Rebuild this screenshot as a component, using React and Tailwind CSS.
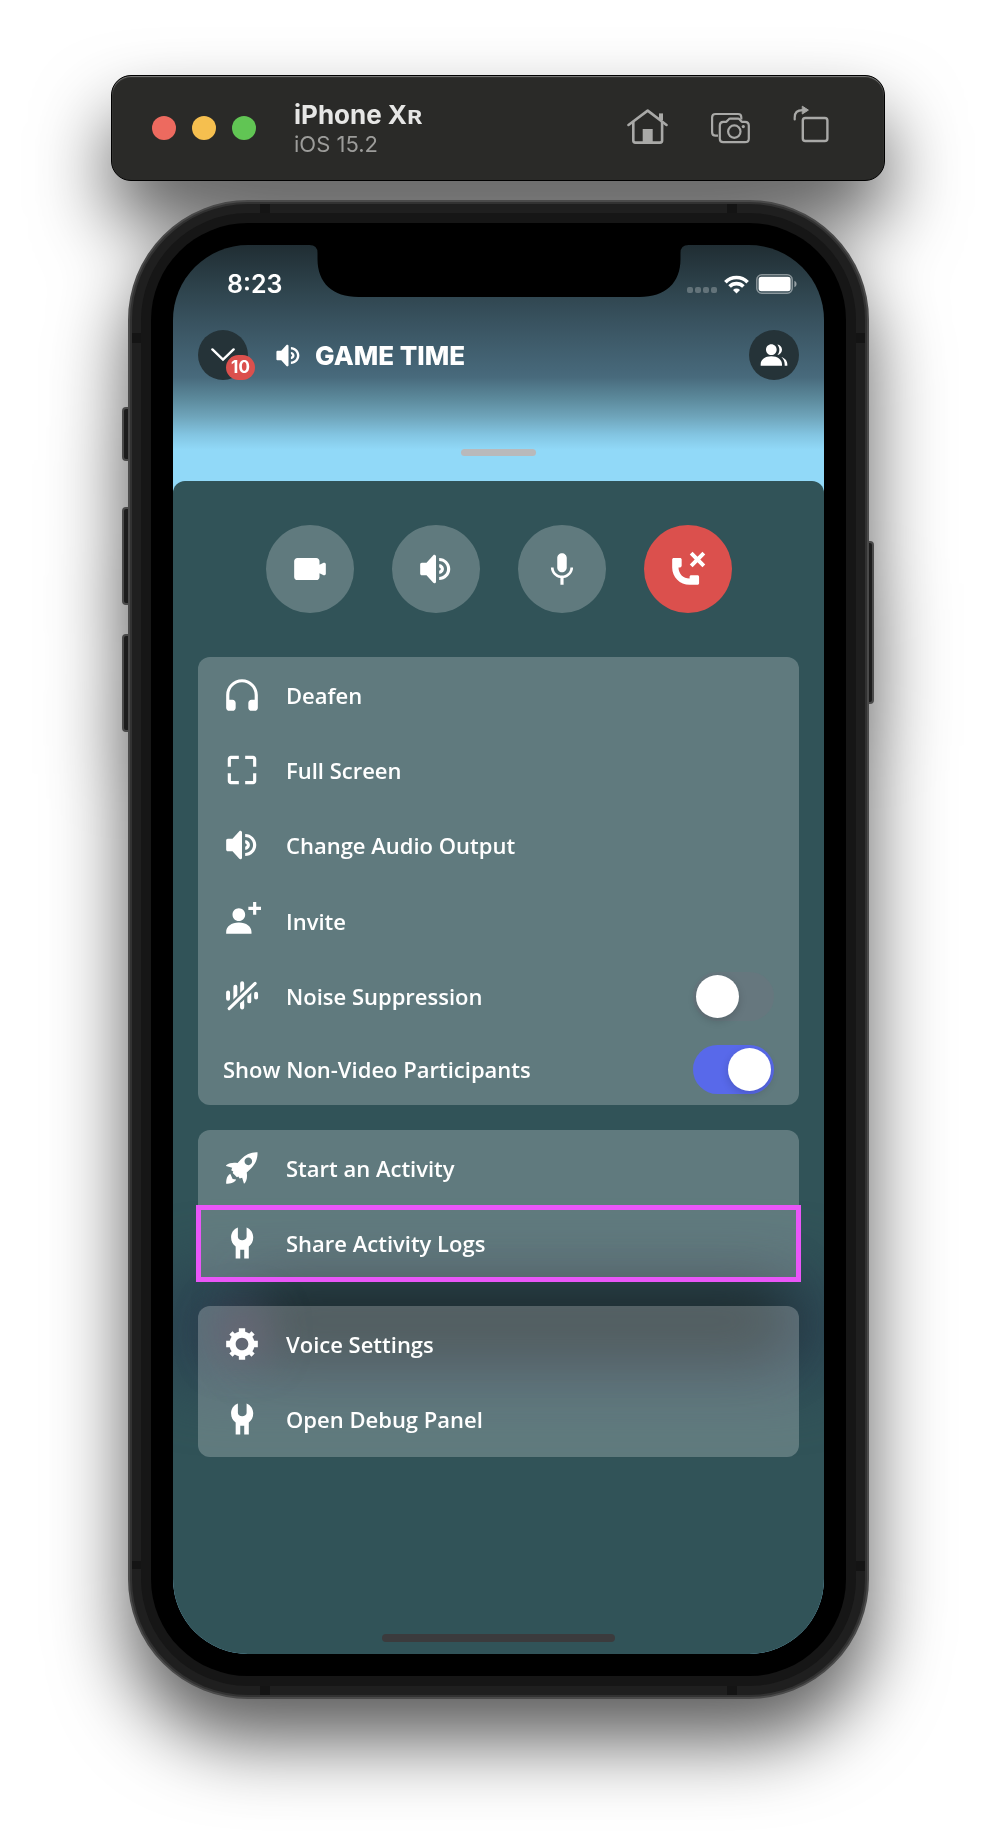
import { useId } from "react";

const paths = {
  headset:
    "M12 2.003C6.486 2.003 2 6.488 2 12.003V20.003C2 21.107 2.895 22.003 4 22.003H6C7.104 22.003 8 21.107 8 20.003V17.003C8 15.899 7.104 15.003 6 15.003H4V12.003C4 7.591 7.589 4.003 12 4.003C16.411 4.003 20 7.591 20 12.003V15.003H18C16.896 15.003 16 15.899 16 17.003V20.003C16 21.107 16.896 22.003 18 22.003H20C21.104 22.003 22 21.107 22 20.003V12.003C22 6.488 17.514 2.003 12 2.003Z",
  fullscreen:
    "M3 10V5C3 3.9 3.9 3 5 3H10V5H5V10H3ZM14 3H19C20.1 3 21 3.9 21 5V10H19V5H14V3ZM3 14H5V19H10V21H5C3.9 21 3 20.1 3 19V14ZM19 14H21V19C21 20.1 20.1 21 19 21H14V19H19V14Z",
  speaker:
    "M11.383 3.079C11.009 2.925 10.579 3.01 10.293 3.296L6 8.002H3C2.45 8.002 2 8.453 2 9.002V15.002C2 15.552 2.45 16.002 3 16.002H6L10.293 20.71C10.579 20.996 11.009 21.082 11.383 20.927C11.757 20.772 12 20.407 12 20.002V4.002C12 3.599 11.757 3.232 11.383 3.079ZM14 5.002V7.002C16.757 7.002 19 9.246 19 12.002C19 14.759 16.757 17.002 14 17.002V19.002C17.86 19.002 21 15.863 21 12.002C21 8.143 17.86 5.002 14 5.002ZM14 9.002C15.654 9.002 17 10.349 17 12.002C17 13.657 15.654 15.002 14 15.002V13.002C14.551 13.002 15 12.553 15 12.002C15 11.451 14.551 11.002 14 11.002V9.002Z",
  invite:
    "M24 3H21V0H19V3H16V5H19V8H21V5H24V3ZM14 8.006C14 10.211 12.206 12.006 10 12.006C7.795 12.006 6 10.211 6 8.006C6 5.801 7.794 4.006 10 4.006C12.206 4.006 14 5.801 14 8.006ZM2 19.006C2 15.473 5.29 13.006 10 13.006C14.711 13.006 18 15.473 18 19.006V20.006H2V19.006Z",
  people:
    "M14 8.006C14 10.211 12.206 12.006 10 12.006C7.795 12.006 6 10.211 6 8.006C6 5.801 7.794 4.006 10 4.006C12.206 4.006 14 5.801 14 8.006ZM2 19.006C2 15.473 5.29 13.006 10 13.006C14.711 13.006 18 15.473 18 19.006V20.006H2V19.006ZM20 20.006H22V19.006C22 16.443 20.27 14.442 17.521 13.535C19.062 14.913 20 16.806 20 19.006V20.006ZM14.883 11.908C16.666 11.504 18 9.908 18 8.006C18 5.969 16.469 4.282 14.497 4.037C15.432 5.095 16 6.485 16 8.006C16 9.449 15.489 10.774 14.638 11.81C14.72 11.842 14.802 11.874 14.883 11.908Z",
  video:
    "M21.526 8.149C21.231 7.966 20.862 7.951 20.553 8.105L18 9.382V7C18 5.897 17.103 5 16 5H4C2.897 5 2 5.897 2 7V17C2 18.104 2.897 19 4 19H16C17.103 19 18 18.104 18 17V14.618L20.553 15.894C20.694 15.965 20.847 16 21 16C21.183 16 21.365 15.949 21.526 15.851C21.82 15.668 22 15.347 22 15V9C22 8.653 21.82 8.332 21.526 8.149Z",
  mic: "M14.99 11C14.99 12.66 13.66 14 12 14C10.34 14 9 12.66 9 11V5C9 3.34 10.34 2 12 2C13.66 2 15 3.34 15 5L14.99 11ZM12 16.1C14.76 16.1 17.3 14 17.3 11H19C19 14.42 16.28 17.24 13 17.72V22H11V17.72C7.72 17.23 5 14.41 5 11H6.7C6.7 14 9.24 16.1 12 16.1Z",
  leave:
    "M21.117 1.116L22.884 2.884L19.768 6L22.884 9.116L21.117 10.884L18 7.768L14.884 10.884L13.117 9.116L16.233 6L13.117 2.884L14.884 1.116L18 4.232L21.117 1.116ZM18 22H13C6.925 22 2 17.075 2 11V6C2 5.447 2.448 5 3 5H7C7.553 5 8 5.447 8 6V10C8 10.553 7.553 11 7 11H6C6.063 14.938 9 18 13 18V17C13 16.447 13.447 16 14 16H18C18.553 16 19 16.447 19 17V21C19 21.553 18.553 22 18 22Z",
  wrench:
    "M9.4 2.2V8.2C9.4 9.5 10.6 10.2 12.1 10.2C13.6 10.2 14.9 9.5 14.9 8.2V2.2C17.5 3.2 19.1 5.6 19.1 8.4C19.1 11 18 13 16.3 14.2V21.8H13.4V16.2H10.9V21.8H8V14.2C6.2 13 5.1 11 5.1 8.4C5.1 5.6 6.7 3.2 9.4 2.2Z",
  gear: "M19.738 10H22V14H19.739C19.498 14.931 19.1 15.798 18.565 16.564L20 18L18 20L16.565 18.564C15.797 19.099 14.932 19.498 14 19.738V22H10V19.738C9.069 19.498 8.203 19.099 7.436 18.564L6 20L4 18L5.436 16.564C4.901 15.799 4.502 14.932 4.262 14H2V10H4.262C4.502 9.068 4.9 8.202 5.436 7.436L4 6L6 4L7.436 5.436C8.202 4.9 9.068 4.502 10 4.262V2H14V4.261C14.932 4.502 15.797 4.9 16.565 5.435L18 4L20 6L18.564 7.436C19.099 8.202 19.498 9.069 19.738 10ZM12 16C14.209 16 16 14.209 16 12C16 9.791 14.209 8 12 8C9.791 8 8 9.791 8 12C8 14.209 9.791 16 12 16Z",
  rocket:
    "M21.8 2.1C17.8 1.9 14.3 3.4 11.4 6.4L9.2 8.9C6.6 8.5 4.2 8.7 2 10.2L1.9 10.7L5.8 11.8L5.2 13.4L6.5 14.2L6.1 15.1L8.8 17.8L9.7 17.4L10.5 18.7L12.1 18.1L13.2 21.8L13.8 21.7C15.2 19.6 15.4 17.3 15 14.8L17.5 12.5C20.5 9.6 22 6.1 21.8 2.1ZM16 5.4C17.35 5.4 18.4 6.5 18.4 7.8C18.4 9.1 17.35 10.2 16 10.2C14.65 10.2 13.6 9.1 13.6 7.8C13.6 6.5 14.65 5.4 16 5.4ZM4.6 15.6C2.6 16.7 2 18.9 2 21.9C5 21.8 7.3 21.3 8.3 19.2L6.1 18.9L4.6 15.6Z",
};

function Icon({ name, className = "size-[38px]" }) {
  return (
    <svg viewBox="0 0 24 24" fill="currentColor" fillRule="evenodd" className={`shrink-0 ${className}`} aria-hidden="true">
      <path d={paths[name]} />
    </svg>
  );
}

function NoiseIcon() {
  return (
    <svg viewBox="0 0 24 24" className="size-[38px] shrink-0" aria-hidden="true">
      <g stroke="currentColor" strokeWidth="2.5" strokeLinecap="round">
        <path d="M3.2 9.8V13.8M7.8 6.2V14M12.1 3.9V18.6M16.6 9V15.4M20.9 10.6V12.9" />
      </g>
      <path d="M2.5 21.4L20.6 4" stroke="#617a7e" strokeWidth="4.8" />
      <path d="M3.9 20L20.3 4" stroke="currentColor" strokeWidth="2" strokeLinecap="round" />
      <path d="M12.1 17V19.2" stroke="currentColor" strokeWidth="2.5" strokeLinecap="round" />
    </svg>
  );
}

function HouseIcon() {
  return (
    <svg viewBox="0 0 42 42" className="size-[42px]" fill="none" stroke="currentColor" strokeWidth="2.6" strokeLinecap="round" strokeLinejoin="round" aria-hidden="true">
      <path d="M2.5 18L21.7 3.6L40.5 18" />
      <path d="M7.3 15V33.5Q7.3 35.6 9.4 35.6H34Q36.1 35.6 36.1 33.5V15" />
      <path d="M35 13V6.4" strokeWidth="4" strokeLinecap="butt" />
      <rect x="16.7" y="22" width="10" height="14" fill="currentColor" stroke="none" />
    </svg>
  );
}

function CamerasIcon() {
  return (
    <svg viewBox="0 2 42 42" className="size-[42px]" fill="none" stroke="currentColor" strokeWidth="2.2" strokeLinejoin="round" aria-hidden="true">
      <path d="M9 30.7H6.6Q3.1 30.7 3.1 27.2V12.4Q3.1 9 6.6 9H29Q32.3 9 32.3 12.2V14.4" />
      <path d="M14.2 16.8H17.4L19.6 14.4Q20.2 13.7 21.2 13.7H29Q30 13.7 30.6 14.4L32.8 16.8H36Q39.8 16.8 39.8 20.4V33.8Q39.8 37.2 36 37.2H14.2Q10.8 37.2 10.8 33.8V20.4Q10.8 16.8 14.2 16.8Z" />
      <circle cx="25.3" cy="26.6" r="6.2" />
      <circle cx="34.3" cy="21.6" r="1.6" fill="currentColor" stroke="none" />
    </svg>
  );
}

function RotateIcon() {
  return (
    <svg viewBox="0 0 42 42" className="size-[42px] overflow-visible" fill="none" stroke="currentColor" strokeWidth="2.4" strokeLinecap="round" aria-hidden="true">
      <rect x="10.8" y="11" width="24.6" height="23" rx="2.6" />
      <path d="M2.7 12.4V10.4Q2.7 3.2 10.5 3.2" strokeWidth="2.2" />
      <path d="M10.6 -0.6L16.4 3.1L10.6 6.8Z" fill="currentColor" strokeWidth="1" strokeLinejoin="round" />
    </svg>
  );
}

function WifiIcon() {
  return (
    <svg viewBox="0 0 25 19" className="h-[19px] w-[25px]" fill="none" stroke="#fff" strokeWidth="3.6" aria-hidden="true">
      <path d="M1.4 7.2A15.4 15.4 0 0 1 23.6 7.2" />
      <path d="M5.6 11.6A9.6 9.6 0 0 1 19.4 11.6" />
      <path d="M12.5 18.6L9 15A5 5 0 0 1 16 15Z" fill="#fff" stroke="none" />
    </svg>
  );
}

function BatteryIcon() {
  return (
    <svg viewBox="0 0 41 20" className="h-[20px] w-[41px]" aria-hidden="true">
      <rect x="0.8" y="0.8" width="35.4" height="18.4" rx="5" fill="none" stroke="#fff" strokeOpacity="0.45" strokeWidth="1.5" />
      <rect x="2.6" y="2.8" width="32" height="14.4" rx="2.6" fill="#fff" />
      <path d="M38.4 6.8Q40.6 7.6 40.6 10T38.4 13.2Z" fill="#fff" fillOpacity="0.5" />
    </svg>
  );
}

function Notch() {
  return (
    <svg viewBox="0 0 379 53" className="absolute top-0 left-1/2 h-[53px] w-[379px] -translate-x-1/2" aria-hidden="true">
      <path d="M0 0H379Q371 0 371 8V14C371 38 356 52 330 52H49C23 52 8 38 8 14V8Q8 0 0 0Z" fill="#000" />
    </svg>
  );
}

function Toggle({ id, defaultChecked }) {
  return (
    <input
      id={id}
      type="checkbox"
      role="switch"
      defaultChecked={defaultChecked}
      className="h-[49px] w-[81px] shrink-0 cursor-pointer appearance-none rounded-full bg-[#66777e] p-[3px] before:block before:size-[43px] before:rounded-full before:bg-white before:shadow-[0_3px_8px_rgba(0,0,0,0.16)] checked:bg-[#5869ea] checked:pl-[35px]"
    />
  );
}

function Card({ children, rows }) {
  return <ul className={`grid rounded-[12px] bg-white/[0.23] ${rows}`}>{children}</ul>;
}

function ActionRow({ icon, children, highlighted }) {
  return (
    <li className="relative">
      <button type="button" className="flex size-full cursor-pointer items-center gap-[25px] px-[25px] text-left">
        <Icon name={icon} />
        {children}
      </button>
      {highlighted && <span className="pointer-events-none absolute -inset-x-[2px] -top-px -bottom-px border-[5px] border-[#e956f8]" />}
    </li>
  );
}

function ToggleRow({ icon, label, defaultChecked }) {
  const id = useId();
  return (
    <li className="flex items-center gap-[25px] px-[25px]">
      {icon}
      <label htmlFor={id} className="flex-1">
        {label}
      </label>
      <Toggle id={id} defaultChecked={defaultChecked} />
    </li>
  );
}

function CallButton({ icon, label, color = "bg-white/[0.23]" }) {
  return (
    <button type="button" aria-label={label} className={`flex size-[88px] cursor-pointer items-center justify-center rounded-full ${color}`}>
      <Icon name={icon} />
    </button>
  );
}

function Toolbar() {
  return (
    <header className="flex h-[106px] items-center rounded-[20px] border border-black bg-[#2a2a28] pr-[50px] pl-[40px] shadow-[inset_0_1px_1px_rgba(255,255,255,0.4)]">
      <div className="flex gap-4">
        <button type="button" aria-label="Close" className="size-6 rounded-full bg-[#ed6a5f]" />
        <button type="button" aria-label="Minimize" className="size-6 rounded-full bg-[#f5bf4f]" />
        <button type="button" aria-label="Zoom" className="size-6 rounded-full bg-[#61c554]" />
      </div>
      <div className="ml-[38px] flex-1 pt-[2px] font-['Inter',sans-serif]">
        <h1 className="text-[26px] leading-[30px] font-bold text-[#e6e6e5]">iPhone Xʀ</h1>
        <p className="text-[22px] leading-[28px] text-[#9c9c9a]">iOS 15.2</p>
      </div>
      <div className="flex gap-[41px] text-[#a9a9a7]">
        <button type="button" aria-label="Home"><HouseIcon /></button>
        <button type="button" aria-label="Screenshot"><CamerasIcon /></button>
        <button type="button" aria-label="Rotate"><RotateIcon /></button>
      </div>
    </header>
  );
}

function StatusBar() {
  return (
    <div className="relative flex h-[78px] items-center justify-between pr-[27px] pl-[54px]">
      <Notch />
      <span className="pt-[2px] font-['Inter',sans-serif] text-[25px] font-semibold">8:23</span>
      <div className="flex items-center gap-[7px]">
        <div className="flex gap-[2px] pt-[12px]">
          <span className="size-[6px] rounded-[2px] bg-white/25" />
          <span className="size-[6px] rounded-[2px] bg-white/25" />
          <span className="size-[6px] rounded-[2px] bg-white/25" />
          <span className="size-[6px] rounded-[2px] bg-white/25" />
        </div>
        <WifiIcon />
        <BatteryIcon />
      </div>
    </div>
  );
}

function ChannelHeader() {
  return (
    <div className="flex items-center px-[25px] pt-[7px]">
      <button type="button" aria-label="Minimize call, 10 mentions" className="relative flex size-[50px] items-center justify-center rounded-full bg-[#253338]">
        <svg viewBox="0 0 24 14" className="h-[14px] w-[24px]" fill="none" stroke="#fff" strokeWidth="2.4" strokeLinecap="round" aria-hidden="true">
          <path d="M1.4 1.4L12 11.6L22.6 1.4" />
        </svg>
        <span className="absolute -right-[7px] bottom-0 flex h-[25px] w-[29px] items-center justify-center rounded-full bg-[#db504d] font-['Inter',sans-serif] text-[17px] font-bold">
          10
        </span>
      </button>
      <Icon name="speaker" className="ml-[26px] size-[29px]" />
      <h2 className="ml-[12px] flex-1 pt-[2px] font-['Inter',sans-serif] text-[26px] leading-[32px] font-extrabold">GAME TIME</h2>
      <button type="button" aria-label="Members" className="flex size-[50px] items-center justify-center rounded-full bg-[#253338]">
        <Icon name="people" className="size-[32px]" />
      </button>
    </div>
  );
}

function Sheet() {
  return (
    <main className="relative overflow-hidden rounded-t-[12px] bg-[#315358] px-[25px] pt-[44px] pb-[12px]">
      <div className="relative flex justify-center gap-[38px]">
        <CallButton icon="video" label="Camera" />
        <CallButton icon="speaker" label="Speaker" />
        <CallButton icon="mic" label="Mute" />
        <CallButton icon="leave" label="Leave call" color="bg-[#db504d]" />
      </div>
      <div className="relative mt-[44px] flex flex-col gap-[25px] font-['Open_Sans',sans-serif] text-[22px] leading-[30px] font-semibold">
        <Card rows="h-[448px] grid-rows-[repeat(5,75fr)_71fr]">
          <ActionRow icon="headset">Deafen</ActionRow>
          <ActionRow icon="fullscreen">Full Screen</ActionRow>
          <ActionRow icon="speaker">Change Audio Output</ActionRow>
          <ActionRow icon="invite">Invite</ActionRow>
          <ToggleRow icon={<NoiseIcon />} label="Noise Suppression" />
          <ToggleRow label="Show Non-Video Participants" defaultChecked />
        </Card>
        <div className="relative z-10">
          <Card rows="h-[151px] grid-rows-2">
            <ActionRow icon="rocket">Start an Activity</ActionRow>
            <ActionRow icon="wrench" highlighted>Share Activity Logs</ActionRow>
          </Card>
        </div>
        <div className="relative">
          <div className="pointer-events-none absolute -inset-x-[50px] -top-[36px] h-[116px] rounded-full bg-[#2b4351] blur-[30px]" />
          <div className="pointer-events-none absolute right-[10px] left-[50px] -top-[24px] h-[78px] rounded-full bg-[#1f2e31] blur-[26px]" />
          <div className="pointer-events-none absolute top-[2px] left-[20px] h-[50px] w-[50px] rounded-full bg-[#40384c] blur-[20px]" />
          <div className="relative">
            <Card rows="h-[151px] grid-rows-2">
              <ActionRow icon="gear">Voice Settings</ActionRow>
              <ActionRow icon="wrench">Open Debug Panel</ActionRow>
            </Card>
          </div>
        </div>
      </div>
      <div className="relative mx-auto mt-[177px] h-[8px] w-[233px] rounded-full bg-[#3b3b3d]" />
    </main>
  );
}

function Phone() {
  return (
    <div className="relative mt-[19px] mr-[16px] ml-[17px]">
      <span className="absolute top-[207px] -left-[6px] h-[54px] w-[12px] rounded-[4px] border-2 border-[#4a4a4a] bg-[#1c1c1c]" />
      <span className="absolute top-[307px] -left-[6px] h-[98px] w-[12px] rounded-[4px] border-2 border-[#4a4a4a] bg-[#1c1c1c]" />
      <span className="absolute top-[434px] -left-[6px] h-[98px] w-[12px] rounded-[4px] border-2 border-[#4a4a4a] bg-[#1c1c1c]" />
      <span className="absolute top-[341px] -right-[5px] h-[163px] w-[12px] rounded-[4px] border-2 border-[#4a4a4a] bg-[#1c1c1c]" />
      <div className="relative rounded-[120px] border-2 border-[#4a4a4a] bg-[#323232] p-[2px]">
        <div className="relative rounded-[116px] bg-[#1f1f1f] p-[9px]">
          <span className="absolute top-0 left-[128px] h-[9px] w-[10px] bg-[#141414]" />
          <span className="absolute top-0 right-[128px] h-[9px] w-[10px] bg-[#141414]" />
          <span className="absolute bottom-0 left-[128px] h-[9px] w-[10px] bg-[#141414]" />
          <span className="absolute right-[128px] bottom-0 h-[9px] w-[10px] bg-[#141414]" />
          <span className="absolute top-[129px] left-0 h-[10px] w-[9px] bg-[#141414]" />
          <span className="absolute top-[129px] right-0 h-[10px] w-[9px] bg-[#141414]" />
          <span className="absolute bottom-[126px] left-0 h-[8px] w-[9px] bg-[#141414]" />
          <span className="absolute right-0 bottom-[124px] h-[10px] w-[9px] bg-[#141414]" />
          <div className="rounded-[107px] bg-[#161616] p-[10px]">
            <div className="rounded-[97px] bg-black p-[22px]">
              <div className="overflow-hidden rounded-[75px] bg-[#91d9f8] bg-[linear-gradient(180deg,#202d33_0px,#304650_50px,#3b5664_85px,#486a7c_132px,#5c8a9c_154px,#6fa5bb_172px,#83c5e2_190px,#91d9f8_205px)] text-white">
                <StatusBar />
                <ChannelHeader />
                <div className="mx-auto mt-[69px] mb-[25px] h-[7px] w-[75px] rounded-full bg-[#b9b9bb]" />
                <Sheet />
              </div>
            </div>
          </div>
        </div>
      </div>
    </div>
  );
}

export default function App() {
  return (
    <div className="overflow-hidden bg-white px-[111px] pt-[75px] pb-[149px]">
      <div className="drop-shadow-[0_42px_38px_rgba(0,0,0,0.64)]">
        <Toolbar />
        <Phone />
      </div>
    </div>
  );
}
